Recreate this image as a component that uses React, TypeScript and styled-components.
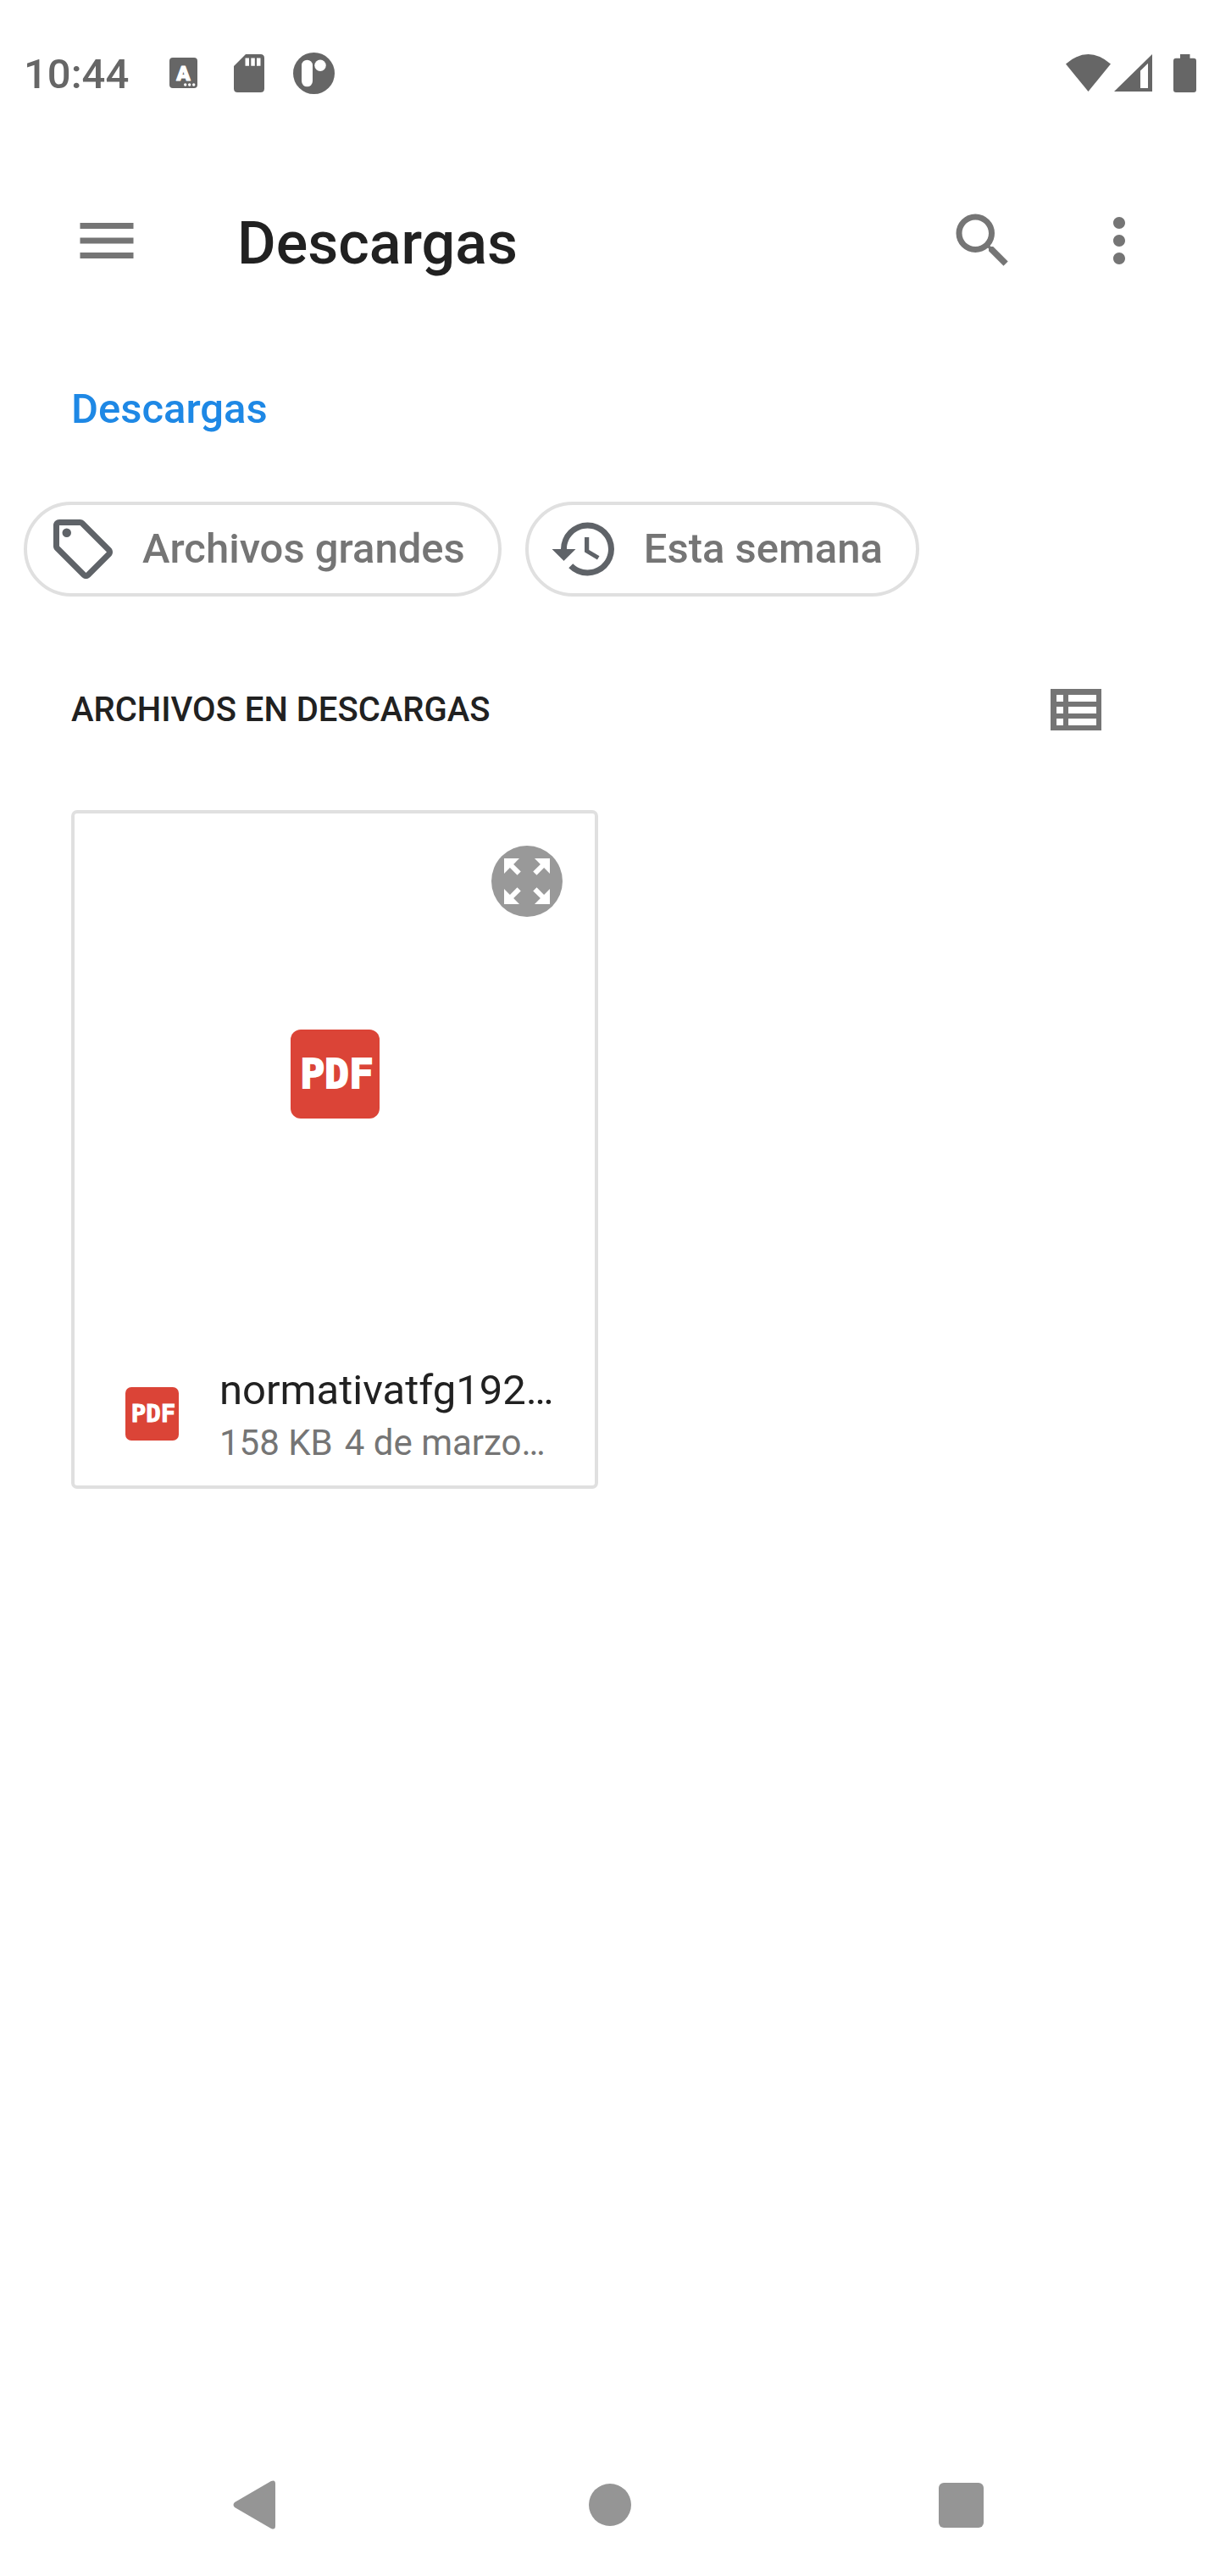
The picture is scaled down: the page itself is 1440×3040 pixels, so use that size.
import React from "react";
import styled, { createGlobalStyle } from "styled-components";

const GlobalStyle = createGlobalStyle`
  *, *::before, *::after { box-sizing: border-box; }
  body {
    margin: 0;
    background: #fff;
    font-family: Roboto, "Noto Sans", sans-serif;
    color: #212121;
  }
  button { font: inherit; }
  svg { display: block; flex: none; }
`;

const Screen = styled.div`
  display: flex;
  flex-direction: column;
  min-height: 100vh;
`;

const StatusBar = styled.div`
  display: flex;
  align-items: center;
  height: 172px;
  padding: 0 28px;
  color: #666;
`;

const Clock = styled.time`
  padding-top: 4px;
  margin-right: 26px;
  font-size: 49px;
  line-height: 56px;
  font-weight: 500;
`;

const StatusSlot = styled.span`
  display: flex;
  justify-content: center;
  width: 77px;
`;

const StatusRight = styled.div`
  display: flex;
  align-items: center;
  gap: 4px;
  margin-left: auto;
`;

const BatterySlot = styled.span`
  padding-left: 21px;
`;

const BadgeLetter = styled.text`
  font: 900 24px Roboto, sans-serif;
  fill: #fff;
  stroke: #fff;
  stroke-width: 1px;
  stroke-linejoin: round;
  text-anchor: middle;
`;

const Toolbar = styled.header`
  display: flex;
  align-items: center;
  height: 224px;
  padding: 0 77px 0 84px;
`;

const Title = styled.h1`
  flex: 1;
  margin: 0;
  padding: 6px 0 0 112px;
  font-size: 70px;
  line-height: 84px;
  font-weight: 500;
`;

const IconButton = styled.button`
  display: flex;
  padding: 0;
  border: 0;
  background: none;
  color: #757575;
  cursor: pointer;
`;

const ToolbarActions = styled.div`
  display: flex;
  gap: 77px;
`;

const Breadcrumb = styled.nav`
  display: flex;
  align-items: center;
  height: 174px;
  padding: 0 84px;
`;

const Crumb = styled.a`
  color: #1e88e5;
  font-size: 49px;
  line-height: 56px;
  font-weight: 500;
  text-decoration: none;
`;

const Chips = styled.div`
  display: flex;
  gap: 28px;
  padding: 22px 28px 0;
`;

const Chip = styled.button`
  display: flex;
  align-items: center;
  gap: 28px;
  height: 112px;
  padding: 0 39px 0 24px;
  border: 4px solid #e0e0e0;
  border-radius: 56px;
  background: none;
  color: #757575;
  font-size: 49px;
  line-height: 56px;
  font-weight: 500;
  white-space: nowrap;
  cursor: pointer;
  svg { color: #5f6368; }
`;

const SectionHead = styled.div`
  display: flex;
  align-items: center;
  justify-content: space-between;
  padding: 91px 128px 77px 84px;
`;

const SectionTitle = styled.h2`
  margin: 0;
  padding-top: 2px;
  font-size: 40px;
  line-height: 56px;
  font-weight: 500;
  text-transform: uppercase;
`;

const ViewToggle = styled(IconButton)`
  align-items: center;
  justify-content: center;
  width: 84px;
  height: 84px;
`;

const Files = styled.ul`
  display: grid;
  grid-template-columns: repeat(2, minmax(0, 1fr));
  gap: 28px;
  margin: 0;
  padding: 0 84px;
  list-style: none;
`;

const Card = styled.li`
  position: relative;
  border: 4px solid #e0e0e0;
  border-radius: 7px;
`;

const Preview = styled.div`
  display: flex;
  align-items: center;
  justify-content: center;
  aspect-ratio: 1;
`;

const ExpandButton = styled(IconButton)`
  position: absolute;
  top: 38px;
  right: 38px;
  padding: 6px;
  border-radius: 50%;
  background: #999;
  color: #fff;
`;

const PdfBadge = styled.span<{ $large?: boolean }>`
  display: flex;
  flex: none;
  align-items: center;
  justify-content: center;
  width: ${(p) => (p.$large ? 105 : 63)}px;
  height: ${(p) => (p.$large ? 105 : 63)}px;
  padding-left: ${(p) => (p.$large ? 5 : 3)}px;
  border-radius: ${(p) => (p.$large ? 12 : 7)}px;
  background: #db4437;
  color: #fff;
  font-family: "DejaVu Sans Mono", monospace;
  font-size: ${(p) => (p.$large ? 48 : 29)}px;
  line-height: 1;
  font-weight: 700;
  -webkit-text-stroke: ${(p) => (p.$large ? 2 : 1)}px #fff;
`;

const FileInfo = styled.div`
  display: flex;
  align-items: center;
  gap: 48px;
  padding: 32px 38px 23px 60px;
`;

const FileText = styled.div`
  min-width: 0;
  white-space: nowrap;
`;

const FileName = styled.div`
  font-size: 49px;
  line-height: 70px;
`;

const FileMeta = styled.div`
  display: flex;
  gap: 14px;
  color: #757575;
  font-size: 42px;
  line-height: 54px;
`;

const SystemNav = styled.nav`
  display: grid;
  grid-template-columns: repeat(3, 1fr);
  align-items: center;
  height: 168px;
  margin-top: auto;
  padding: 0 98px;
`;

const NavButton = styled(IconButton)`
  justify-content: center;
  color: #959595;
`;

function Icon({ d, size = 84 }: { d: string; size?: number }) {
  return (
    <svg width={size} height={size} viewBox="0 0 24 24" fill="currentColor" aria-hidden="true">
      <path d={d} />
    </svg>
  );
}

const icons = {
  menu: "M3 18h18v-2H3v2zm0-5h18v-2H3v2zm0-7v2h18V6H3z",
  search:
    "M15.5 14h-.79l-.28-.27A6.471 6.471 0 0 0 16 9.5 6.5 6.5 0 1 0 9.5 16c1.61 0 3.09-.59 4.23-1.57l.27.28v.79l5 4.99L20.49 19l-4.99-5zm-6 0C7.01 14 5 11.99 5 9.5S7.01 5 9.5 5 14 7.01 14 9.5 11.99 14 9.5 14z",
  more:
    "M12 8c1.1 0 2-.9 2-2s-.9-2-2-2-2 .9-2 2 .9 2 2 2zm0 2c-1.1 0-2 .9-2 2s.9 2 2 2 2-.9 2-2-.9-2-2-2zm0 6c-1.1 0-2 .9-2 2s.9 2 2 2 2-.9 2-2-.9-2-2-2z",
  tag:
    "M21.41 11.58l-9-9C12.05 2.22 11.55 2 11 2H4c-1.1 0-2 .9-2 2v7c0 .55.22 1.05.59 1.42l9 9c.36.36.86.58 1.41.58s1.05-.22 1.41-.59l7-7c.37-.36.59-.86.59-1.41s-.23-1.06-.59-1.42zM13 20.01L4 11V4h7v-.01l9 9-7 7.02zM8 6.5a1.5 1.5 0 1 1-3 0 1.5 1.5 0 0 1 3 0z",
  history:
    "M13 3a9 9 0 0 0-9 9H1l3.89 3.89.07.14L9 12H6c0-3.87 3.13-7 7-7s7 3.13 7 7-3.13 7-7 7c-1.93 0-3.68-.79-4.94-2.06l-1.42 1.42A8.954 8.954 0 0 0 13 21a9 9 0 0 0 0-18zm-1 5v5l4.28 2.54.72-1.21-3.5-2.08V8H12z",
  expand:
    "M15 3l2.3 2.3-2.89 2.87 1.42 1.42L18.7 6.7 21 9V3zM3 9l2.3-2.3 2.87 2.89 1.42-1.42L6.7 5.3 9 3H3zm6 12l-2.3-2.3 2.89-2.87-1.42-1.42L5.3 17.3 3 15v6zm12-6l-2.3 2.3-2.87-2.89-1.42 1.42 2.89 2.87L15 21h6z",
};

const files = [{ name: "normativatfg192…", size: "158 KB", date: "4 de marzo…" }];

export default function App() {
  return (
    <Screen>
      <GlobalStyle />
      <StatusBar>
        <Clock>10:44</Clock>
        <StatusSlot>
          <svg width="33" height="36" viewBox="0 0 33 36" aria-hidden="true">
            <rect width="33" height="36" rx="4" fill="currentColor" />
            <BadgeLetter x="16.5" y="26.5">A</BadgeLetter>
            <g fill="#fff">
              <circle cx="18.7" cy="32" r="1.7" />
              <circle cx="23.7" cy="32" r="1.7" />
              <circle cx="28.7" cy="32" r="1.7" />
            </g>
          </svg>
        </StatusSlot>
        <StatusSlot>
          <svg width="36" height="45" viewBox="0 0 36 45" aria-hidden="true">
            <path
              fill="currentColor"
              fillRule="evenodd"
              d="M14 0H31.500Q36 0 36 4.500V40.500Q36 45 31.500 45H4.500Q0 45 0 40.500V14zM13.500 4.500V13.800H18V4.500zM20.300 4.500V13.800H24.800V4.500zM27 4.500V13.800H31.500V4.500z"
            />
          </svg>
        </StatusSlot>
        <StatusSlot>
          <svg width="49" height="49" viewBox="0 0 49 49" aria-hidden="true">
            <circle cx="24.500" cy="24.500" r="24.500" fill="currentColor" />
            <rect x="10" y="8.700" width="13" height="31.600" rx="6.500" fill="#fff" />
            <circle cx="32" cy="15.300" r="6.700" fill="#fff" />
          </svg>
        </StatusSlot>
        <StatusRight>
          <svg width="53" height="44" viewBox="0 0 53 44" fill="currentColor" aria-hidden="true">
            <path d="M0 11.500Q26.500 -11.500 53 11.500L26.500 44z" />
          </svg>
          <svg width="45" height="44" viewBox="0 0 45 44" fill="currentColor" aria-hidden="true">
            <path fillRule="evenodd" d="M0 44L45 0V44zM31 19.500V40H40V10.800z" />
          </svg>
          <BatterySlot>
            <svg width="27" height="45" viewBox="0 0 27 45" fill="currentColor" aria-hidden="true">
              <rect x="8" width="11.500" height="8" />
              <rect y="4.700" width="27" height="40.300" rx="3" />
            </svg>
          </BatterySlot>
        </StatusRight>
      </StatusBar>

      <Toolbar>
        <IconButton aria-label="Menú">
          <Icon d={icons.menu} />
        </IconButton>
        <Title>Descargas</Title>
        <ToolbarActions>
          <IconButton aria-label="Buscar">
            <Icon d={icons.search} />
          </IconButton>
          <IconButton aria-label="Más opciones">
            <Icon d={icons.more} />
          </IconButton>
        </ToolbarActions>
      </Toolbar>

      <Breadcrumb aria-label="Ruta">
        <Crumb href="#descargas">Descargas</Crumb>
      </Breadcrumb>

      <main>
        <Chips>
          <Chip>
            <Icon d={icons.tag} />
            Archivos grandes
          </Chip>
          <Chip>
            <Icon d={icons.history} />
            Esta semana
          </Chip>
        </Chips>

        <SectionHead>
          <SectionTitle>Archivos en Descargas</SectionTitle>
          <ViewToggle aria-label="Vista de lista">
            <svg width="60" height="49" viewBox="0 0 60 49" fill="currentColor" aria-hidden="true">
              <path
                fillRule="evenodd"
                d="M0 0H60V49H0zM7 7V15H15V7zM21 7V15H54V7zM7 21V29H15V21zM21 21V29H54V21zM7 35V43H15V35zM21 35V43H54V35z"
              />
            </svg>
          </ViewToggle>
        </SectionHead>

        <Files>
          {files.map((file) => (
            <Card key={file.name}>
              <Preview>
                <PdfBadge $large>PDF</PdfBadge>
              </Preview>
              <ExpandButton aria-label="Vista previa">
                <Icon d={icons.expand} size={72} />
              </ExpandButton>
              <FileInfo>
                <PdfBadge>PDF</PdfBadge>
                <FileText>
                  <FileName>{file.name}</FileName>
                  <FileMeta>
                    <span>{file.size}</span>
                    <span>{file.date}</span>
                  </FileMeta>
                </FileText>
              </FileInfo>
            </Card>
          ))}
        </Files>
      </main>

      <SystemNav aria-label="Sistema">
        <NavButton aria-label="Atrás">
          <svg width="60" height="60" viewBox="0 0 60 60" fill="currentColor" aria-hidden="true">
            <path d="M2 27L45 2Q50 0 50 5V55Q50 60 45 58L2 33Q-1 30 2 27z" />
          </svg>
        </NavButton>
        <NavButton aria-label="Inicio">
          <svg width="50" height="50" viewBox="0 0 50 50" fill="currentColor" aria-hidden="true">
            <circle cx="25" cy="25" r="25" />
          </svg>
        </NavButton>
        <NavButton aria-label="Recientes">
          <svg width="53" height="53" viewBox="0 0 53 53" fill="currentColor" aria-hidden="true">
            <rect width="53" height="53" rx="6" />
          </svg>
        </NavButton>
      </SystemNav>
    </Screen>
  );
}
